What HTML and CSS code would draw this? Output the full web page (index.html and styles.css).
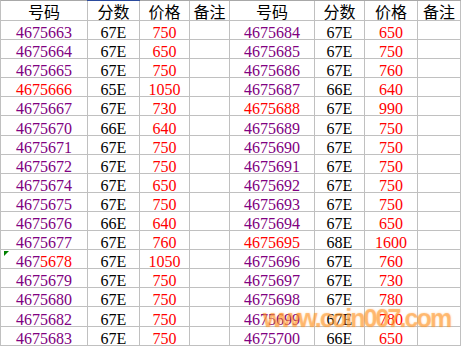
FILE: index.html
```html
<!DOCTYPE html>
<html lang="zh-CN">
<head>
<meta charset="utf-8">
<title>号码表</title>
<link rel="stylesheet" href="styles.css">
</head>
<body>
<div class="page">
  <div class="sheet">
    <div class="c hd">号码</div><div class="c hd sel">分数</div><div class="c hd">价格</div><div class="c hd">备注</div>
    <div class="c hd">号码</div><div class="c hd">分数</div><div class="c hd">价格</div><div class="c hd">备注</div>

    <div class="c pu">4675663</div><div class="c bk">67E</div><div class="c rd">750</div><div class="c"></div>
    <div class="c pu">4675684</div><div class="c bk">67E</div><div class="c rd">650</div><div class="c"></div>

    <div class="c pu">4675664</div><div class="c bk">67E</div><div class="c rd">650</div><div class="c"></div>
    <div class="c pu">4675685</div><div class="c bk">67E</div><div class="c rd">750</div><div class="c"></div>

    <div class="c pu">4675665</div><div class="c bk">67E</div><div class="c rd">750</div><div class="c"></div>
    <div class="c pu">4675686</div><div class="c bk">67E</div><div class="c rd">760</div><div class="c"></div>

    <div class="c rd">4675666</div><div class="c bk">65E</div><div class="c rd">1050</div><div class="c"></div>
    <div class="c pu">4675687</div><div class="c bk">66E</div><div class="c rd">640</div><div class="c"></div>

    <div class="c pu">4675667</div><div class="c bk">67E</div><div class="c rd">730</div><div class="c"></div>
    <div class="c rd">4675688</div><div class="c bk">67E</div><div class="c rd">990</div><div class="c"></div>

    <div class="c pu">4675670</div><div class="c bk">66E</div><div class="c rd">640</div><div class="c"></div>
    <div class="c pu">4675689</div><div class="c bk">67E</div><div class="c rd">750</div><div class="c"></div>

    <div class="c pu">4675671</div><div class="c bk">67E</div><div class="c rd">750</div><div class="c"></div>
    <div class="c pu">4675690</div><div class="c bk">67E</div><div class="c rd">750</div><div class="c"></div>

    <div class="c pu">4675672</div><div class="c bk">67E</div><div class="c rd">750</div><div class="c"></div>
    <div class="c pu">4675691</div><div class="c bk">67E</div><div class="c rd">750</div><div class="c"></div>

    <div class="c pu">4675674</div><div class="c bk">67E</div><div class="c rd">650</div><div class="c"></div>
    <div class="c pu">4675692</div><div class="c bk">67E</div><div class="c rd">750</div><div class="c"></div>

    <div class="c pu">4675675</div><div class="c bk">67E</div><div class="c rd">750</div><div class="c"></div>
    <div class="c pu">4675693</div><div class="c bk">67E</div><div class="c rd">750</div><div class="c"></div>

    <div class="c pu">4675676</div><div class="c bk">66E</div><div class="c rd">640</div><div class="c"></div>
    <div class="c pu">4675694</div><div class="c bk">67E</div><div class="c rd">650</div><div class="c"></div>

    <div class="c pu">4675677</div><div class="c bk">67E</div><div class="c rd">760</div><div class="c"></div>
    <div class="c rd">4675695</div><div class="c bk">68E</div><div class="c rd">1600</div><div class="c"></div>

    <div class="c flag"><span><span class="pu">467</span><span class="rd">5678</span></span></div><div class="c bk">67E</div><div class="c rd">1050</div><div class="c"></div>
    <div class="c pu">4675696</div><div class="c bk">67E</div><div class="c rd">760</div><div class="c"></div>

    <div class="c pu">4675679</div><div class="c bk">67E</div><div class="c rd">750</div><div class="c"></div>
    <div class="c pu">4675697</div><div class="c bk">67E</div><div class="c rd">730</div><div class="c"></div>

    <div class="c pu">4675680</div><div class="c bk">67E</div><div class="c rd">750</div><div class="c"></div>
    <div class="c pu">4675698</div><div class="c bk">67E</div><div class="c rd">780</div><div class="c"></div>

    <div class="c pu">4675682</div><div class="c bk">67E</div><div class="c rd">750</div><div class="c"></div>
    <div class="c pu">4675699</div><div class="c bk">67E</div><div class="c rd">780</div><div class="c"></div>

    <div class="c pu">4675683</div><div class="c bk">67E</div><div class="c rd">750</div><div class="c"></div>
    <div class="c pu">4675700</div><div class="c bk">66E</div><div class="c rd">650</div><div class="c"></div>
  </div>
  <div class="watermark">www.coin007.com</div>
</div>
</body>
</html>
```
FILE: styles.css
```css
html, body {
  margin: 0;
  padding: 0;
  background: #ffffff;
}

.page {
  position: relative;
  width: 463px;
  height: 348px;
  overflow: hidden;
}

.sheet {
  display: grid;
  grid-template-columns: 87px 52px 50px 40px 85px 50px 53px 43px;
  grid-template-rows: 20px repeat(17, 19.1px);
  width: max-content;
  border-top: 1px solid #a8a8a8;
  border-left: 1px solid #c0c0c0;
}

.c {
  position: relative;
  box-sizing: border-box;
  border-right: 1px solid #c0c0c0;
  border-bottom: 1px solid #c0c0c0;
  display: flex;
  align-items: flex-end;
  justify-content: center;
  font-family: "Liberation Serif", "Times New Roman", serif;
  font-size: 16px;
  line-height: 13px;
  white-space: nowrap;
  overflow: visible;
}

.hd {
  align-items: flex-end;
  font-family: "Noto Sans CJK SC", "Noto Sans CJK JP", sans-serif;
  font-size: 16px;
  line-height: 17px;
  padding-bottom: 0;
  color: #000000;
}

.sel::before {
  content: "";
  position: absolute;
  left: -1px;
  right: -1px;
  top: -1px;
  height: 1px;
  background: #2b4a9c;
}

.pu { color: #800080; }
.rd { color: #ff0000; }
.bk { color: #000000; }

.flag::before {
  content: "";
  position: absolute;
  left: 3px;
  top: 1px;
  width: 0;
  height: 0;
  border-top: 5px solid #008000;
  border-right: 5px solid transparent;
}

.watermark {
  position: absolute;
  left: 263px;
  top: 306px;
  font-family: "Liberation Sans", Arial, sans-serif;
  font-weight: bold;
  font-size: 25px;
  line-height: 25px;
  letter-spacing: -1.9px;
  color: rgba(255, 150, 40, 0.5);
  text-shadow: 0 0 2px rgba(255, 150, 40, 0.4);
  white-space: nowrap;
  pointer-events: none;
}
```
